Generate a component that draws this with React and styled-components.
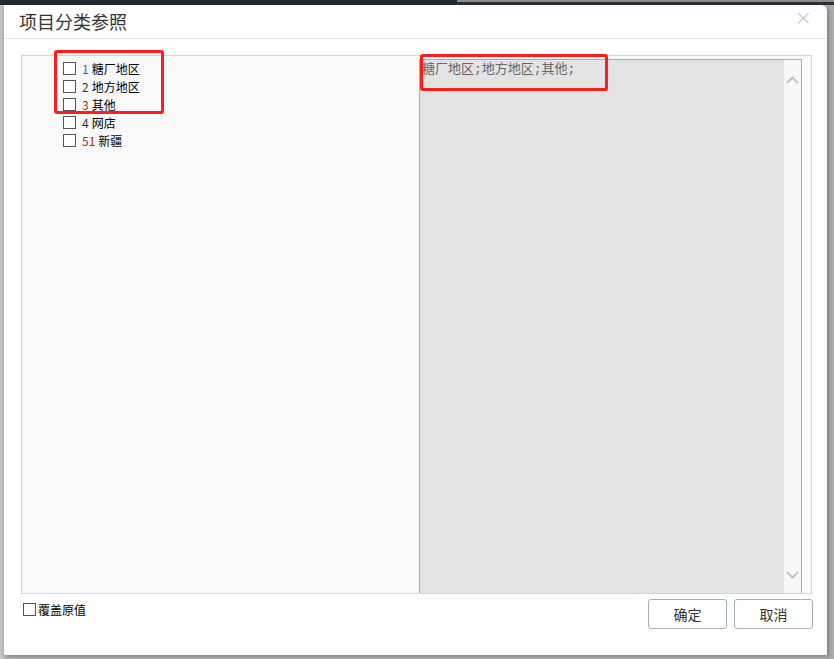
import React from "react";
import styled, { createGlobalStyle } from "styled-components";

const Global = createGlobalStyle`
  html, body { margin: 0; padding: 0; }
  body {
    width: 834px; height: 659px; overflow: hidden;
    background: #bcbcbc;
    font-family: "Noto Sans CJK SC", "Noto Sans", sans-serif;
  }
`;

const Page = styled.div`
  position: relative;
  width: 834px;
  height: 659px;
  display: flex;
  flex-direction: column;
  background: linear-gradient(to right, #c4c4c4 0 4px, #bcbcbc 4px 827px, #aaaaaa 827px);
`;

const TopBar = styled.div`
  height: 5px;
  flex: none;
  background: linear-gradient(to right, #222a36 0 457px, #2a313b 457px);
  border-top: 1px solid transparent;
  box-sizing: border-box;
  position: relative;
  &::after {
    content: "";
    position: absolute;
    left: 457px; right: 0; top: -1px; height: 2px;
    background: #8d8d8d;
  }
`;

const Dialog = styled.div`
  margin-left: 4px;
  width: 823px;
  height: 650px;
  background: #fff;
  border-radius: 0 6px 0 0;
  box-shadow: 1px 2px 4px rgba(0,0,0,0.35);
  display: flex;
  flex-direction: column;
  position: relative;
  font-family: "Noto Sans CJK SC", "Noto Sans", sans-serif;
`;

const TitleBar = styled.div`
  height: 33px;
  border-bottom: 1px solid #e5e5e5;
  display: flex;
  align-items: center;
  justify-content: space-between;
  padding: 0 15px 0 15px;
  box-sizing: content-box;
`;

const Title = styled.div`
  font-size: 18px;
  color: #333;
  line-height: 1;
  margin-top: -1px;
`;

const Close = styled.div`
  font-family: "DejaVu Sans", sans-serif;
  font-size: 21px;
  font-weight: 300;
  color: #c2c2c2;
  line-height: 1;
  margin-top: -7px;
`;

const Body = styled.div`
  padding: 16px 15px 0 17px;
`;

const Panel = styled.div`
  height: 539px;
  box-sizing: border-box;
  border: 1px solid #c9d7e5;
  background: #f9f9f9;
  display: grid;
  grid-template-columns: 397px 383px 1fr;
  overflow: hidden;
`;

const List = styled.div`
  padding: 3px 0 0 41px;
  display: flex;
  flex-direction: column;
`;

const Row = styled.label`
  display: flex;
  align-items: center;
  height: 18px;
  font-size: 12px;
  color: #000;
`;

const Box = styled.span`
  width: 11px;
  height: 11px;
  border: 1px solid #555;
  background: #fff;
  flex: none;
  margin-right: ${p => p.$gap || 6}px;
`;

const Num = styled.span`
  color: ${p => p.$color};
  margin-right: 3px;
`;

const TextArea = styled.div`
  margin-top: 3px;
  border: 1px solid #ababab;
  border-bottom: none;
  display: grid;
  grid-template-columns: 1fr 17px;
`;

const AreaText = styled.div`
  background: #e3e3e3;
  padding: 2px 2px;
  font-family: "Liberation Mono", "Noto Sans CJK SC", monospace;
  font-size: 13px;
  line-height: 15px;
  color: #666;
`;

const Scroll = styled.div`
  background: #f8f8f8;
  display: flex;
  flex-direction: column;
  justify-content: space-between;
  align-items: center;
  padding: 16px 0 14px;
`;

const Footer = styled.div`
  display: flex;
  justify-content: space-between;
  align-items: flex-start;
  padding: 5px 14px 0 19px;
`;

const Cover = styled.label`
  display: flex;
  align-items: center;
  font-size: 12px;
  color: #000;
  margin-top: 2px;
`;

const Buttons = styled.div`
  display: flex;
  gap: 7px;
`;

const Button = styled.button`
  width: 79px;
  height: 30px;
  border: 1px solid #a4afbb;
  border-radius: 3px;
  background: #fff;
  font-family: "Noto Sans CJK SC", sans-serif;
  font-size: 14px;
  color: #333;
  padding: 0;
`;

const Mark = styled.div`
  position: absolute;
  border: 3px solid #fe1d1d;
  border-radius: 3px;
  box-sizing: border-box;
  pointer-events: none;
`;

const Chevron = ({ up }) => (
  <svg width="13" height="8" viewBox="0 0 13 8">
    <path
      d={up ? "M1 7 L6.5 1.5 L12 7" : "M1 1 L6.5 6.5 L12 1"}
      fill="none"
      stroke="#c4c4c4"
      strokeWidth="2"
    />
  </svg>
);

const items = [
  { n: "1", c: "#1f66b8", t: "糖厂地区" },
  { n: "2", c: "#4a2e1a", t: "地方地区" },
  { n: "3", c: "#7a3e14", t: "其他" },
  { n: "4", c: "#3e1f70", t: "网店" },
  { n: "51", c: "#9a2e1c", t: "新疆" },
];

export default function App() {
  return (
    <Page>
      <Global />
      <TopBar />
      <Dialog>
        <TitleBar>
          <Title>项目分类参照</Title>
          <Close>×</Close>
        </TitleBar>
        <Body>
          <Panel>
            <List>
              {items.map(it => (
                <Row key={it.n}>
                  <Box />
                  <Num $color={it.c}>{it.n}</Num>
                  {it.t}
                </Row>
              ))}
            </List>
            <TextArea>
              <AreaText>糖厂地区;地方地区;其他;</AreaText>
              <Scroll>
                <Chevron up />
                <Chevron />
              </Scroll>
            </TextArea>
            <div />
          </Panel>
        </Body>
        <Footer>
          <Cover>
            <Box $gap={2} />
            覆盖原值
          </Cover>
          <Buttons>
            <Button>确定</Button>
            <Button>取消</Button>
          </Buttons>
        </Footer>
      </Dialog>
      <Mark style={{ left: 54, top: 50, width: 110, height: 64 }} />
      <Mark style={{ left: 420, top: 54, width: 188, height: 37 }} />
    </Page>
  );
}
